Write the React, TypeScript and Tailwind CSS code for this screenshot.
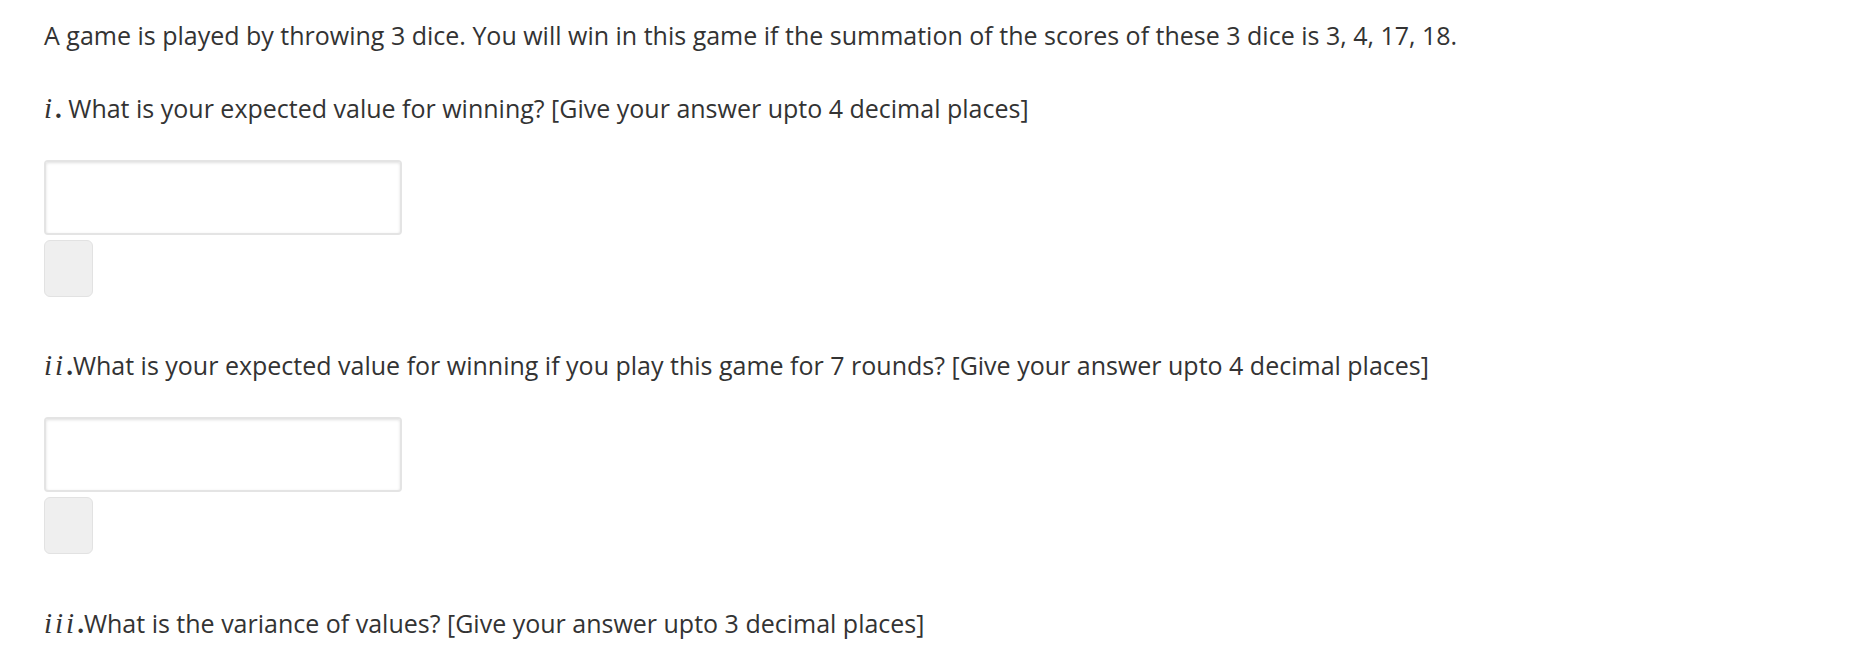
import React from "react"

const questions = [
  { num: "i", spaced: true, gap: "mt-[39px]", text: "What is your expected value for winning? [Give your answer upto 4 decimal places]", input: true },
  { num: "ii", spaced: false, gap: "mt-[51px]", text: "What is your expected value for winning if you play this game for 7 rounds? [Give your answer upto 4 decimal places]", input: true },
  { num: "iii", spaced: false, gap: "mt-[52px]", text: "What is the variance of values? [Give your answer upto 3 decimal places]", input: false },
]

// roman numeral typeset like the math font in the original
function MathNum({ value }: { value: string }) {
  return (
    <span className="font-['Liberation_Serif',serif] leading-[0]">
      <span className="italic text-[29px] tracking-[3px]">{value}</span>
      <span className="text-[27px] font-bold">.</span>
    </span>
  )
}

export default function App() {
  return (
    <div className="min-h-[666px] bg-white px-[44px] pt-[18px] text-[#333] font-['Open_Sans',sans-serif] text-[25px] leading-[34px]">
      <p>
        A game is played by throwing 3 dice. You will win in this game if the summation of the scores of these 3 dice is 3, 4, 17, 18.
      </p>
      {questions.map((q) => (
        <div key={q.num}>
          <p className={q.gap}>
            <MathNum value={q.num} />
            {q.spaced ? " " : ""}
            {q.text}
          </p>
          {q.input && (
            <div className="mt-[35px] flex flex-col items-start gap-[5px]">
              <input
                type="text"
                className="w-[358px] h-[75px] rounded-[4px] border-2 border-[#e4e4e4] bg-white shadow-[inset_0_1px_3px_rgba(0,0,0,0.12)] outline-none"
              />
              <button className="w-[49px] h-[57px] rounded-[6px] border border-[#e2e2e2] bg-[#efefef]" />
            </div>
          )}
        </div>
      ))}
    </div>
  )
}
